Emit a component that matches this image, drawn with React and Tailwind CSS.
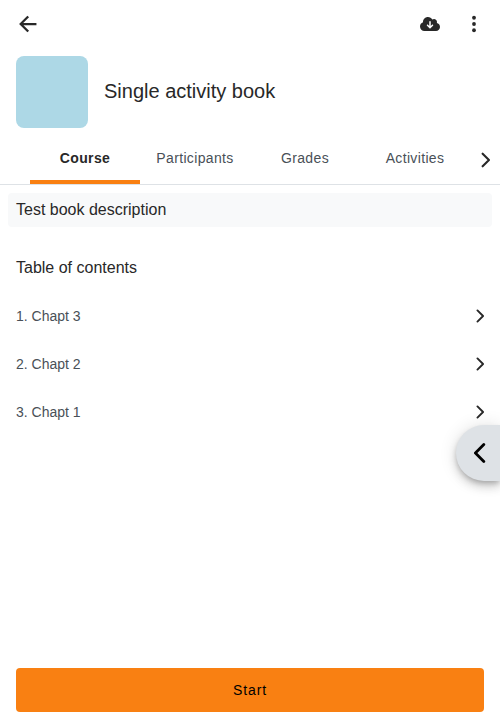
import React from "react";
import { FaCloudArrowDown } from "react-icons/fa6";

const tabs = ["Course", "Participants", "Grades", "Activities"];
const chapters = ["1. Chapt 3", "2. Chapt 2", "3. Chapt 1"];

function BackArrow({ className }) {
  return (
    <svg
      viewBox="0 0 512 512"
      className={className}
      fill="none"
      stroke="currentColor"
      strokeWidth="48"
      strokeLinecap="square"
      strokeMiterlimit="10"
    >
      <path d="M244 400 100 256l144-144M120 256h292" />
    </svg>
  );
}

function Dots({ className }) {
  return (
    <svg viewBox="0 0 4 20" className={className} fill="currentColor">
      <circle cx="2" cy="3.75" r="1.9" />
      <circle cx="2" cy="10" r="1.9" />
      <circle cx="2" cy="16.25" r="1.9" />
    </svg>
  );
}

function Chevron({ className }) {
  return (
    <svg
      viewBox="102 50.5 250 411"
      preserveAspectRatio="xMaxYMid meet"
      className={className}
      fill="none"
      stroke="currentColor"
      strokeWidth="48"
      strokeLinecap="round"
      strokeLinejoin="round"
    >
      <path d="m184 112 144 144-144 144" />
    </svg>
  );
}

function Header() {
  return (
    <header className="flex h-12 items-center pr-1.5 pl-4 text-[#282828]">
      <BackArrow className="size-6" />
      <div className="ml-auto flex items-center">
        <span className="flex w-12 justify-center">
          <FaCloudArrowDown className="h-4 w-5" />
        </span>
        <span className="flex w-10 justify-center">
          <Dots className="h-5 w-1" />
        </span>
      </div>
    </header>
  );
}

function Tabs() {
  return (
    <nav className="mt-1 flex h-[53px] border-b border-[#dee2e6] pl-[30px]">
      {tabs.map((tab, i) => (
        <div
          key={tab}
          className={
            "flex w-[110px] items-center justify-center border-b-4 pt-1 text-sm tracking-[0.35px] " +
            (i === 0
              ? "border-[#f98012] font-bold text-[#282828]"
              : "border-transparent text-[#495057]")
          }
        >
          {tab}
        </div>
      ))}
      <div className="flex flex-1 items-center justify-end pt-1 pr-2.5 text-[#282828]">
        <Chevron className="h-[18px] w-[11px]" />
      </div>
    </nav>
  );
}

export default function App() {
  return (
    <div className="relative flex h-[720px] w-full flex-col overflow-hidden bg-white font-['Liberation_Sans',Arial,sans-serif] text-[#282828]">
      <Header />
      <div className="mt-2 flex h-[72px] items-center gap-4 px-4">
        <div className="size-[72px] rounded-lg bg-[#add8e6]" />
        <h1 className="pb-0.5 text-xl">Single activity book</h1>
      </div>
      <Tabs />
      <p className="mx-2 mt-2 flex h-[34px] items-center rounded bg-[#f8f9fa] px-2 text-base">
        Test book description
      </p>
      <h2 className="mt-[29px] px-4 text-base leading-6">Table of contents</h2>
      <ul className="mt-3">
        {chapters.map((chapter) => (
          <li
            key={chapter}
            className="flex h-12 items-center justify-between px-4 text-sm text-[#495057]"
          >
            <span>{chapter}</span>
            <Chevron className="h-4 w-2.5 text-[#282828]" />
          </li>
        ))}
      </ul>
      <button className="absolute top-[425px] right-0 flex h-14 w-11 items-center rounded-l-[28px] bg-[#dee2e6] pl-[18px] text-black shadow-[0_3px_5px_-1px_rgba(0,0,0,0.2),0_6px_10px_0_rgba(0,0,0,0.14),0_1px_18px_0_rgba(0,0,0,0.12)]">
        <Chevron className="h-6 w-[15px] rotate-180" />
      </button>
      <button className="mx-4 mt-auto mb-2 h-11 shrink-0 rounded bg-[#f98012] text-sm tracking-[0.84px] text-black">
        Start
      </button>
    </div>
  );
}
